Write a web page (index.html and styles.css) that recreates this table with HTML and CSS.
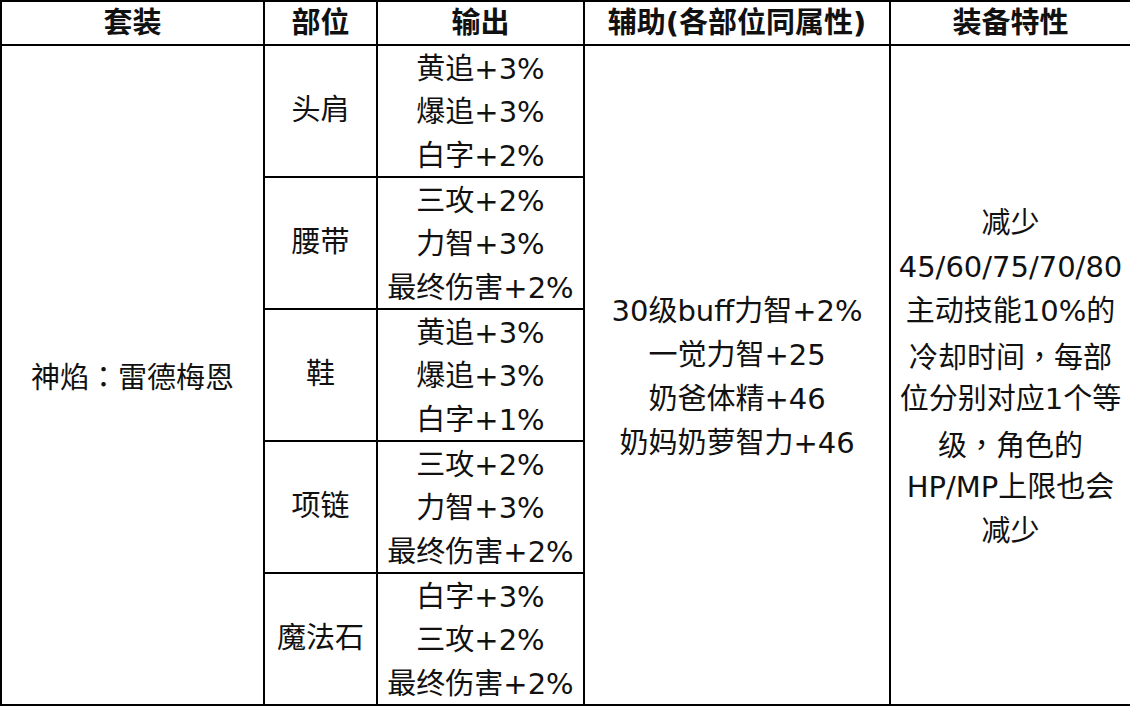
FILE: index.html
```html
<!DOCTYPE html>
<html lang="zh-CN">
<head>
<meta charset="utf-8">
<link rel="stylesheet" href="styles.css">
</head>
<body>
<table class="tbl">
  <colgroup>
    <col class="c1"><col class="c2"><col class="c3"><col class="c4"><col class="c5">
  </colgroup>
  <thead>
    <tr class="head">
      <th>套装</th><th>部位</th><th>输出</th><th>辅助(各部位同属性)</th><th>装备特性</th>
    </tr>
  </thead>
  <tbody>
    <tr class="part">
      <td rowspan="5" class="span">神焰<span class="punc" lang="zh-TW">：</span>雷德梅恩</td>
      <td class="pos">头肩</td>
      <td><div class="ln">黄追+3%</div><div class="ln">爆追+3%</div><div class="ln">白字+2%</div></td>
      <td rowspan="5" class="span"><div class="ln2">30级buff力智+2%</div><div class="ln2">一觉力智+25</div><div class="ln2">奶爸体精+46</div><div class="ln2">奶妈奶萝智力+46</div></td>
      <td rowspan="5" class="span"><div class="ln2">减少</div><div class="ln2">45/60/75/70/80</div><div class="ln2">主动技能10%的</div><div class="ln2">冷却时间<span class="punc" lang="zh-TW">，</span>每部</div><div class="ln2">位分别对应1个等</div><div class="ln2">级<span class="punc" lang="zh-TW">，</span>角色的</div><div class="ln2">HP/MP上限也会</div><div class="ln2">减少</div></td>
    </tr>
    <tr class="part">
      <td class="pos">腰带</td>
      <td><div class="ln">三攻+2%</div><div class="ln">力智+3%</div><div class="ln">最终伤害+2%</div></td>
    </tr>
    <tr class="part">
      <td class="pos">鞋</td>
      <td><div class="ln">黄追+3%</div><div class="ln">爆追+3%</div><div class="ln">白字+1%</div></td>
    </tr>
    <tr class="part">
      <td class="pos">项链</td>
      <td><div class="ln">三攻+2%</div><div class="ln">力智+3%</div><div class="ln">最终伤害+2%</div></td>
    </tr>
    <tr class="part">
      <td class="pos">魔法石</td>
      <td><div class="ln">白字+3%</div><div class="ln">三攻+2%</div><div class="ln">最终伤害+2%</div></td>
    </tr>
  </tbody>
</table>
</body>
</html>
```

FILE: styles.css
```css
html, body {
  margin: 0;
  padding: 0;
  background: #ffffff;
}
body {
  font-family: "DejaVu Sans", "Noto Sans CJK SC", sans-serif;
  color: #111111;
}
.tbl {
  width: 1130px;
  table-layout: fixed;
  border-collapse: collapse;
  font-size: 29px;
}
.c1 { width: 263px; }
.c2 { width: 113px; }
.c3 { width: 207px; }
.c4 { width: 306px; }
.c5 { width: 241px; }
.tbl th, .tbl td {
  border: 2px solid #000000;
  padding: 0;
  text-align: center;
  vertical-align: middle;
  white-space: nowrap;
  overflow: hidden;
}
.tbl th {
  height: 42px;
  font-weight: bold;
  line-height: 42px;
}
.part td {
  height: 130px;
  line-height: 43.33px;
}
.tbl td.span {
  padding-top: 4px;
}
.ln {
  box-sizing: border-box;
  line-height: 43.33px;
  height: 43.33px;
  padding-top: 2px;
}
.ln2 {
  line-height: 44px;
  height: 44px;
}
.punc {
  font-family: "Noto Sans CJK TC", sans-serif;
}
```
